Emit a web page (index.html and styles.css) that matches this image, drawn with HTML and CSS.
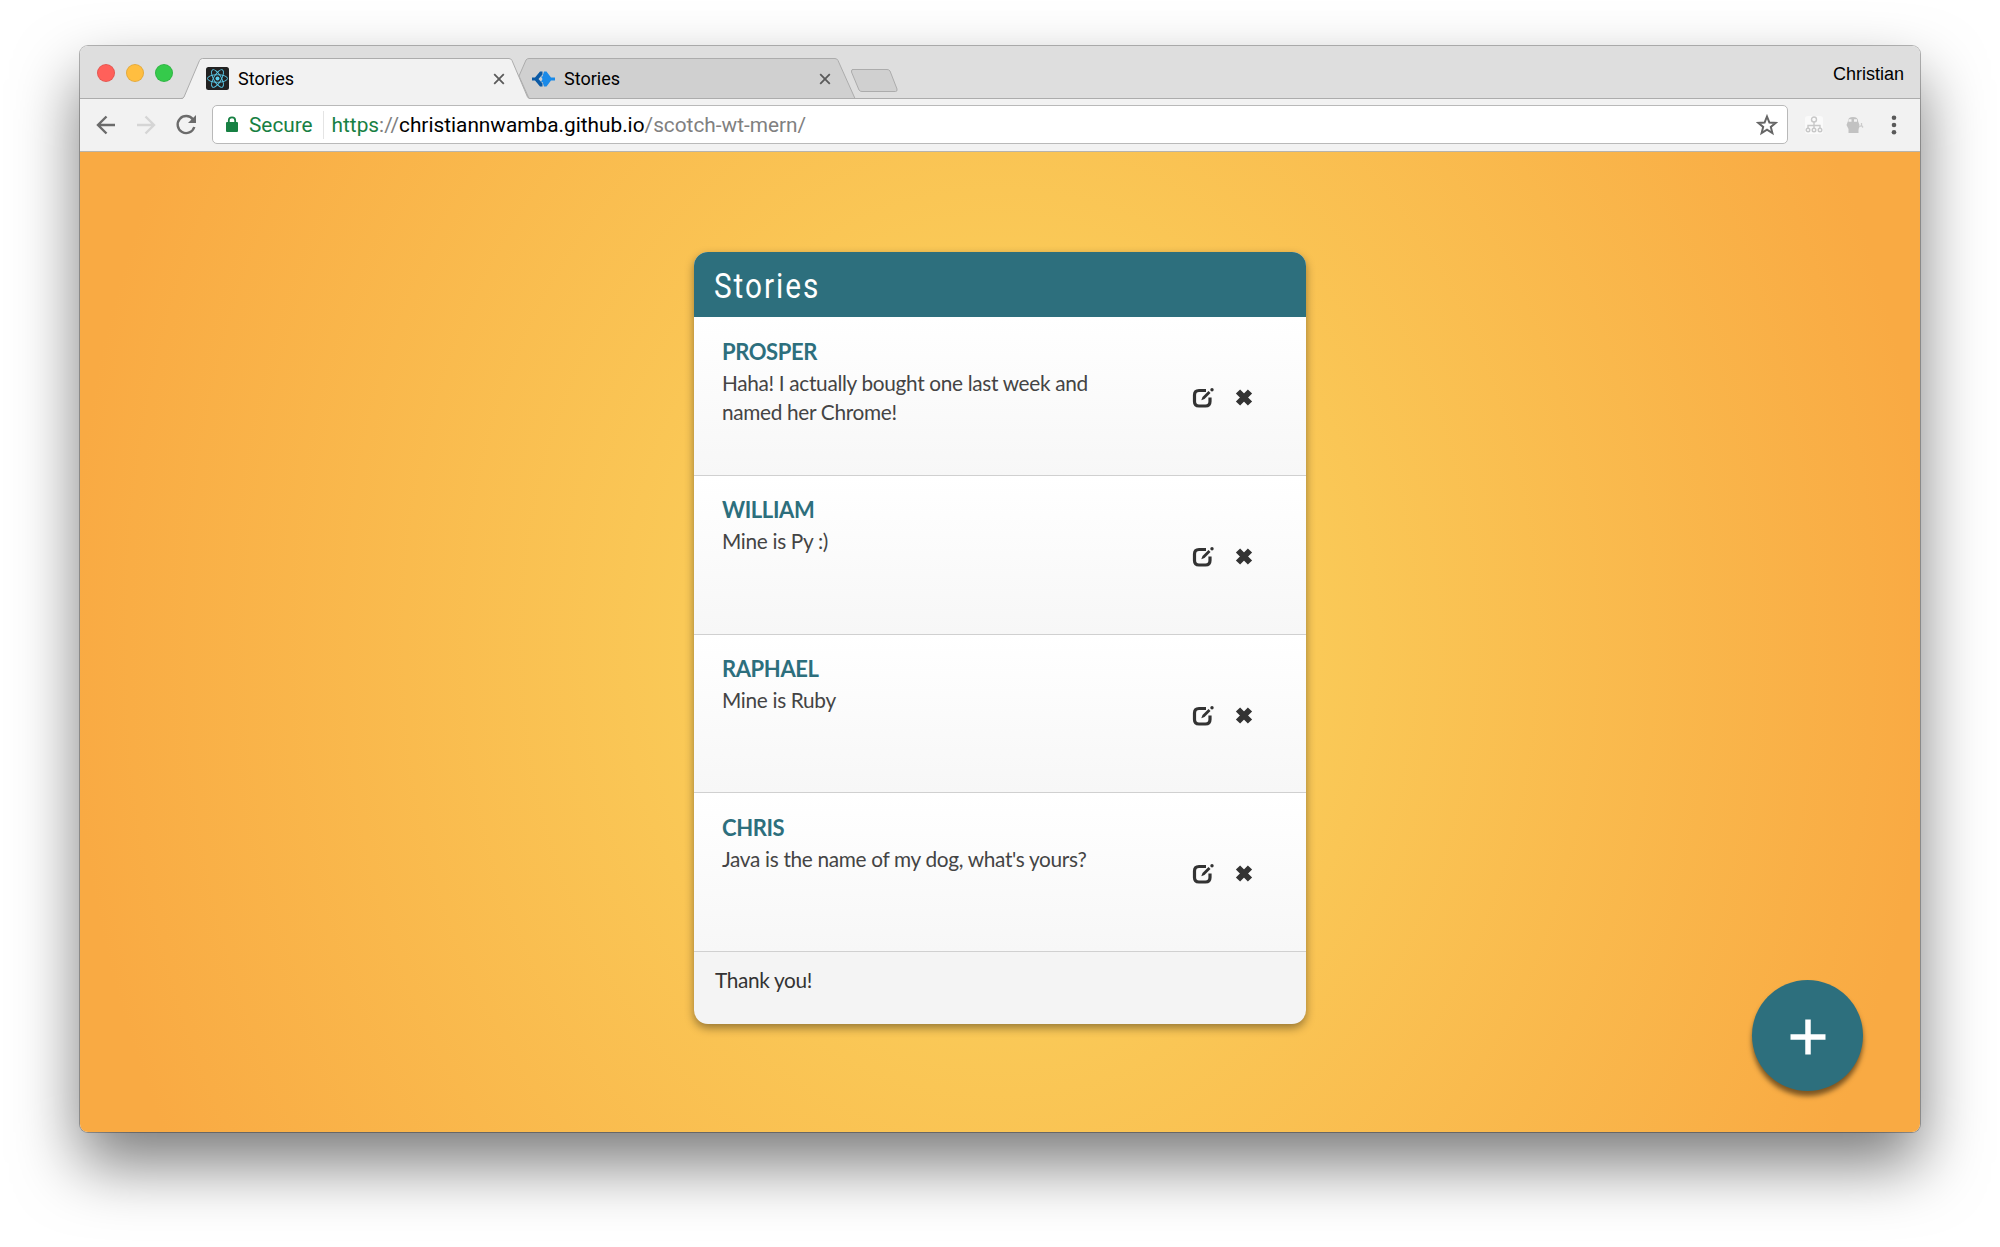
FILE: index.html
```html
<!DOCTYPE html>
<html lang="en">
<head>
<meta charset="utf-8">
<title>Stories</title>
<link rel="stylesheet" href="styles.css">
</head>
<body>
<div class="window">
  <header class="tabstrip">
    <svg class="tabshapes" width="1840" height="53" viewBox="0 0 1840 53">
      <path d="M0 52.5H1840" stroke="#acacac"/>
      <path d="M449 52.500L439 30L446 14Q447 12.500 449 12.500H755Q757 12.500 758 14.500L775 52.500Z" fill="#d0d0d0" stroke="#acacac"/>
      <path d="M772 23.500H807Q809 23.500 810 25L817 43Q817.500 45.500 815.500 45.500H782Q780 45.500 779 44L771.500 26Q771 23.500 773 23.500Z" fill="#d0d0d0" stroke="#acacac"/>
      <path d="M101 53H102Q103 53 104 51L119.500 14.500Q120.500 12.500 122.500 12.500H429Q431 12.500 432 14.500L447.500 51Q448.500 53 450 53Z" fill="#f2f2f2"/>
      <path d="M101 52.500Q103 52.500 104 51L119.500 14.500Q120.500 12.500 122.500 12.500H429Q431 12.500 432 14.500L447.500 51Q448.500 52.500 450 52.500" fill="none" stroke="#acacac"/>
    </svg>
    <div class="lights"><i class="red"></i><i class="amber"></i><i class="green"></i></div>
    <div class="tab">
      <svg width="23" height="23" viewBox="0 0 23 23"><rect width="23" height="23" rx="2.500" fill="#222"/><g fill="none" stroke="#5ccfee" stroke-width=".9"><ellipse cx="11.500" cy="11.500" rx="10" ry="3.800"/><ellipse cx="11.500" cy="11.500" rx="10" ry="3.800" transform="rotate(60 11.500 11.500)"/><ellipse cx="11.500" cy="11.500" rx="10" ry="3.800" transform="rotate(120 11.500 11.500)"/></g><circle cx="11.500" cy="11.500" r="2" fill="#5ccfee"/></svg>
      <span>Stories</span>
      <svg class="close" width="12" height="12" viewBox="0 0 12 12"><path d="M1.200 1.200l9.600 9.600M10.800 1.200l-9.600 9.600"/></svg>
    </div>
    <div class="tab">
      <svg width="23" height="16" viewBox="0 0 23 16"><path d="M0 6.500h3L8 .5h2.500v3L6.500 8l4 4.500v3H8L3 9.500H0z" fill="#0b5aa5"/><path d="M9 5.500h1.500L12 .5h2.500l4.500 6h4v3h-4l-4.500 6H12l-1.500-4.500H9L10.500 8z" fill="#1a8ae8"/></svg>
      <span>Stories</span>
      <svg class="close" width="12" height="12" viewBox="0 0 12 12"><path d="M1.200 1.200l9.600 9.600M10.800 1.200l-9.600 9.600"/></svg>
    </div>
    <span class="profile">Christian</span>
  </header>
  <nav class="toolbar">
    <svg class="nav back" width="20" height="20" viewBox="0 0 20 20"><path d="M19 10H2M10.500 1.500L2 10l8.500 8.500"/></svg>
    <svg class="nav forward" width="20" height="20" viewBox="0 0 20 20"><path d="M1 10h17M9.500 1.500L18 10l-8.500 8.500"/></svg>
    <svg class="nav reload" width="22" height="22" viewBox="0 0 22 22"><path d="M18 5.500A8.500 8.500 0 1 0 19.300 13"/><path class="solid" d="M21 1v8h-8z"/></svg>
    <div class="address">
      <svg class="lock" width="12" height="17" viewBox="0 0 12 17"><rect y="6" width="12" height="10" rx="1" fill="#178043"/><path d="M2.800 6.500V4.500a3.200 3.200 0 0 1 6.400 0v2" fill="none" stroke="#178043" stroke-width="1.800"/></svg>
      <span class="secure">Secure</span>
      <span class="url"><b>https</b>://<em>christiannwamba.github.io</em>/scotch-wt-mern/</span>
      <svg class="star" width="22" height="22" viewBox="0 0 22 22"><path d="M11 2.500l2.400 6 6.200.4-4.800 4 1.600 6.200-5.400-3.400-5.400 3.400 1.600-6.200-4.800-4 6.200-.4z"/></svg>
    </div>
    <svg class="tree" width="18" height="18" viewBox="0 0 18 18"><rect width="18" height="18" rx="3" fill="#fafafa"/><g fill="none" stroke="#c8c8c8" stroke-width="1.400"><circle cx="9" cy="3.500" r="2.500"/><path d="M9 6v6M3 12V9.500h12V12"/><circle cx="3" cy="14" r="1.800"/><circle cx="9" cy="14" r="1.800"/><circle cx="15" cy="14" r="1.800"/></g></svg>
    <svg class="bot" width="18" height="18" viewBox="0 0 18 18"><path d="M2 5Q2 1 7 1t5 4l1.500 4-1 5v3H2.500v-4L.500 9z" fill="#c2c2c2"/><path d="M2.500 4.500h3M8 4.500h3" stroke="#f4f4f4" stroke-width="2.500"/><path d="M13 11l2.500-1.500V7M15.500 9.500l1.500 2" fill="none" stroke="#ccc" stroke-width="1.300"/></svg>
    <svg class="menu" width="6" height="20" viewBox="0 0 6 20"><g fill="#5a5a5a"><circle cx="3" cy="2.700" r="2.300"/><circle cx="3" cy="10" r="2.300"/><circle cx="3" cy="17.300" r="2.300"/></g></svg>
  </nav>
  <main class="page">
    <section class="card">
      <h1><span>Stories</span></h1>
      <article>
        <div class="story"><h2>PROSPER</h2><p>Haha! I actually bought one last week and<br>named her Chrome!</p></div>
        <svg class="actions" width="62" height="22" viewBox="0 0 62 22"><use href="#actions"/></svg>
      </article>
      <article>
        <div class="story"><h2>WILLIAM</h2><p>Mine is Py :)</p></div>
        <svg class="actions" width="62" height="22" viewBox="0 0 62 22"><use href="#actions"/></svg>
      </article>
      <article>
        <div class="story"><h2>RAPHAEL</h2><p>Mine is Ruby</p></div>
        <svg class="actions" width="62" height="22" viewBox="0 0 62 22"><use href="#actions"/></svg>
      </article>
      <article>
        <div class="story"><h2>CHRIS</h2><p>Java is the name of my dog, what's yours?</p></div>
        <svg class="actions" width="62" height="22" viewBox="0 0 62 22"><use href="#actions"/></svg>
      </article>
      <footer>Thank you!</footer>
    </section>
    <button class="add" aria-label="Add story"><svg width="36" height="36" viewBox="0 0 36 36"><path d="M18 .5v35M.5 18h35" stroke="#fff" stroke-width="5.500"/></svg></button>
  </main>
</div>
<svg class="defs" width="0" height="0"><defs><g id="actions"><path d="M14 3.500H7Q2.500 3.500 2.500 8v6.500q0 4.500 4.500 4.500h6.500q4.500 0 4.500-4.500V10.500" fill="none" stroke="#333" stroke-width="3.200"/><path d="M9.300 13.300l1.200-3.300 6-6 2 2-6 6z" fill="#333"/><circle cx="20" cy="2.700" r="1.700" fill="#333"/><path d="M46 4.500l12 12M58 4.500l-12 12" stroke="#333" stroke-width="6"/></g></defs></svg>
</body>
</html>
```
FILE: styles.css
```css
* { box-sizing: border-box; }
body { margin: 0; height: 1247px; overflow: hidden; background: #fff; padding: 46px 80px; font-family: Lato, sans-serif; }
.defs { position: absolute; }
.window { width: 1840px; height: 1086px; border-radius: 8px; overflow: hidden; display: flex; flex-direction: column; box-shadow: 0 0 0 1px rgba(0,0,0,.28), 0 32px 64px rgba(0,0,0,.52); }
.tabstrip { position: relative; height: 53px; background: #dedede; display: flex; flex: none; font: 18px Roboto, sans-serif; color: #000; }
.tabshapes { position: absolute; left: 0; top: 0; }
.lights { display: flex; gap: 11px; padding: 18px 0 0 17px; width: 126px; }
.lights i { width: 18px; height: 18px; border-radius: 50%; border: 1px solid rgba(0,0,0,.1); }
.lights .red { background: #ff605a; }
.lights .amber { background: #ffbe40; }
.lights .green { background: #35ca4b; }
.tab { position: relative; display: flex; align-items: center; width: 326px; height: 41px; margin-top: 12px; gap: 9px; }
.tab span { flex: 1; }
.close { margin-right: 27px; stroke: #5a5a5a; stroke-width: 1.8; }
.profile { position: relative; margin: 17px 16px 0 auto; font-family: "Liberation Sans", sans-serif; line-height: 23px; }
.toolbar { height: 53px; flex: none; background: #f2f2f2; border-bottom: 1px solid #b8b4ac; display: flex; align-items: center; padding-bottom: 1px; }
.nav { fill: none; stroke: #6b6b6b; stroke-width: 2.4; }
.back { margin-left: 16px; }
.forward { margin-left: 20px; stroke: #d5d5d5; }
.reload { margin-left: 19px; }
.solid { fill: #6b6b6b; stroke: none; }
.address { width: 1576px; height: 39px; margin-left: 15px; background: #fff; border: 1px solid #b9b9b9; border-radius: 5px; display: flex; align-items: center; padding: 0 9px 0 13px; font: 20.8px Roboto, sans-serif; color: #808080; }
.secure { color: #178043; margin-left: 11px; padding-right: 10px; border-right: 1px solid #e4e4e4; line-height: 28px; }
.url { margin-left: 8px; }
.url b { font-weight: 400; color: #178043; }
.url em { font-style: normal; color: #000; }
.star { margin-left: auto; fill: none; stroke: #666; stroke-width: 2; }
.tree { margin-left: 17px; }
.bot { margin-left: 23px; }
.menu { margin-left: 27px; }
.page { position: relative; flex: 1; background: radial-gradient(960px 1150px at 50% 50%, #fbcd59, #fac957 33%, #f9aa43 97%); padding-top: 100px; }
.card { width: 612px; height: 772px; margin: 0 auto; border-radius: 14px; overflow: hidden; background: #f4f4f4; box-shadow: 0 4px 10px rgba(0,0,0,.4); }
.card h1 { margin: 0; height: 65px; background: #2d6f7d; color: #fff; font: 400 35px/69px Roboto, sans-serif; padding-left: 20px; }
.card h1 span { display: inline-block; letter-spacing: 2.3px; transform: scaleX(.85); transform-origin: 0 0; }
article { height: 158.75px; padding: 21.5px 52px 0 28px; display: flex; justify-content: space-between; background: linear-gradient(#fff, #f7f7f7); border-bottom: 1px solid #d0d0d0; }
h2 { margin: 0; font-size: 22px; line-height: 26px; letter-spacing: -.4px; color: #2d6f7d; font-weight: 700; }
.story p { margin: 3px 0 0; font-size: 20.8px; line-height: 29px; letter-spacing: -.32px; color: #444; white-space: nowrap; }
.actions { margin-top: 48.5px; }
footer { padding: 13px 21px; font-size: 20.8px; letter-spacing: -.35px; line-height: 30px; color: #333; }
.add { position: absolute; right: 57px; bottom: 41px; width: 111px; height: 111px; border: 0; border-radius: 50%; background: #2d6f7d; padding: 3px 0 0; display: grid; place-items: center; box-shadow: 0 5px 5px rgba(0,0,0,.5); }
```
